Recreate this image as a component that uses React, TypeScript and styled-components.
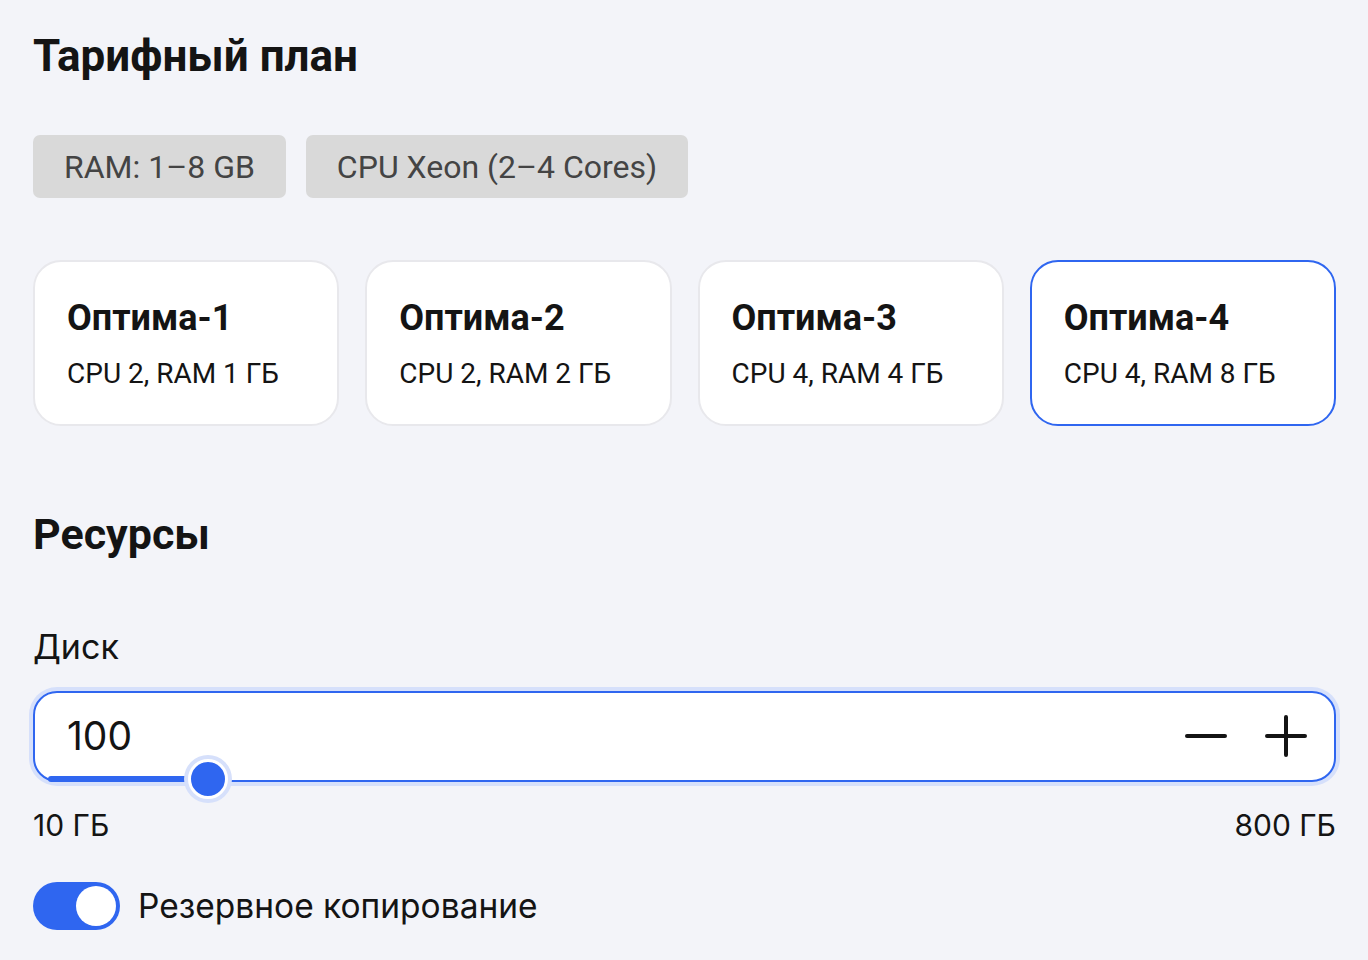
import React, { useState } from "react";
import styled, { createGlobalStyle } from "styled-components";

const GlobalStyle = createGlobalStyle`
  * { box-sizing: border-box; }
  body {
    margin: 0;
    background: #f3f4f9;
    font-family: Roboto, "Noto Sans", sans-serif;
    color: #141414;
  }
`;

interface planTypes {
  name: string;
  spec: string;
}

const plans: planTypes[] = [
  { name: "Оптима-1", spec: "CPU 2, RAM 1 ГБ" },
  { name: "Оптима-2", spec: "CPU 2, RAM 2 ГБ" },
  { name: "Оптима-3", spec: "CPU 4, RAM 4 ГБ" },
  { name: "Оптима-4", spec: "CPU 4, RAM 8 ГБ" },
];

const MIN_DISK = 10;
const MAX_DISK = 800;

const App = () => {
  const [selected, setSelected] = useState<number>(3);
  const [disk, setDisk] = useState<number>(100);
  const [backup, setBackup] = useState<boolean>(true);

  const percent = ((disk - MIN_DISK) / (MAX_DISK - MIN_DISK)) * 100;
  const thumbLeft = `calc(${percent}% + 15px)`;

  return (
    <Page>
      <GlobalStyle />
      <Title>Тарифный план</Title>
      <Chips>
        <Chip>RAM: 1–8 GB</Chip>
        <Chip>CPU Xeon (2–4 Cores)</Chip>
      </Chips>
      <Cards>
        {plans.map((plan, i) => (
          <Card key={plan.name} $active={i === selected} onClick={() => setSelected(i)}>
            <CardName>{plan.name}</CardName>
            <CardSpec>{plan.spec}</CardSpec>
          </Card>
        ))}
      </Cards>

      <SectionTitle>Ресурсы</SectionTitle>
      <FieldLabel>Диск</FieldLabel>
      <InputBox>
        <Value>{disk}</Value>
        <StepButton onClick={() => setDisk(Math.max(MIN_DISK, disk - 10))} aria-label="minus">
          <svg width="42" height="42" viewBox="0 0 42 42">
            <path d="M2 21h38" stroke="#141414" strokeWidth="4" strokeLinecap="round" />
          </svg>
        </StepButton>
        <StepButton onClick={() => setDisk(Math.min(MAX_DISK, disk + 10))} aria-label="plus">
          <svg width="42" height="42" viewBox="0 0 42 42">
            <path d="M2 21h38M21 2v38" stroke="#141414" strokeWidth="4" strokeLinecap="round" />
          </svg>
        </StepButton>
        <Track>
          <Fill style={{ width: thumbLeft }} />
          <Thumb style={{ left: thumbLeft }} />
        </Track>
      </InputBox>
      <Range>
        <span>10 ГБ</span>
        <span>800 ГБ</span>
      </Range>

      <ToggleRow onClick={() => setBackup(!backup)}>
        <Switch $on={backup}>
          <Knob />
        </Switch>
        <ToggleLabel>Резервное копирование</ToggleLabel>
      </ToggleRow>
    </Page>
  );
};

const Page = styled.div`
  padding: 28px 32px 0 33px;
  display: flex;
  flex-direction: column;
`;

const Title = styled.h1`
  margin: 0;
  font-size: 44px;
  line-height: 56px;
  font-weight: 700;
`;

const Chips = styled.div`
  display: flex;
  gap: 20px;
  margin-top: 51px;
`;

const Chip = styled.div`
  height: 63px;
  padding: 0 31px;
  display: flex;
  align-items: center;
  background: #d9d9d9;
  border-radius: 7px;
  color: #444;
  font-size: 32px;
`;

const Cards = styled.div`
  display: grid;
  grid-template-columns: repeat(4, 1fr);
  gap: 26px;
  margin-top: 62px;
`;

const Card = styled.div<{ $active: boolean }>`
  height: 166px;
  padding: 34px 32px 0;
  background: #fff;
  border: 2px solid ${(p) => (p.$active ? "#2f66f0" : "#e8e8ec")};
  border-radius: 28px;
  cursor: pointer;
`;

const CardName = styled.div`
  font-size: 36px;
  line-height: 44px;
  font-weight: 700;
`;

const CardSpec = styled.div`
  margin-top: 18px;
  font-size: 28px;
  line-height: 32px;
`;

const SectionTitle = styled.h2`
  margin: 80px 0 0;
  font-size: 43px;
  line-height: 56px;
  font-weight: 700;
`;

const FieldLabel = styled.div`
  margin-top: 64px;
  font-family: Inter, Roboto, sans-serif;
  font-size: 34px;
  line-height: 42px;
`;

const InputBox = styled.div`
  position: relative;
  margin-top: 23px;
  height: 91px;
  display: flex;
  align-items: center;
  gap: 38px;
  padding: 0 27px 2px 32px;
  background: #fff;
  border: 2px solid #2f66f0;
  border-radius: 24px;
  box-shadow: 0 0 0 4px #d6e0fb;
`;

const Value = styled.div`
  flex: 1;
  font-family: Inter, Roboto, sans-serif;
  font-size: 39px;
  color: #141414;
`;

const StepButton = styled.button`
  border: 0;
  background: none;
  padding: 0;
  display: flex;
  cursor: pointer;
`;

const Track = styled.div`
  position: absolute;
  left: 13px;
  right: 13px;
  bottom: -2px;
  height: 6px;
`;

const Fill = styled.div`
  height: 6px;
  background: #2f66f0;
  border-radius: 3px;
`;

const Thumb = styled.div`
  position: absolute;
  top: 3px;
  width: 40px;
  height: 40px;
  margin: -20px 0 0 -20px;
  border-radius: 50%;
  background: #2f66f0;
  border: 3px solid #fff;
  box-shadow: 0 0 0 4px #d6e0fb;
`;

const Range = styled.div`
  display: flex;
  justify-content: space-between;
  margin-top: 23px;
  font-family: Inter, Roboto, sans-serif;
  font-size: 30px;
  line-height: 40px;
`;

const ToggleRow = styled.div`
  display: flex;
  align-items: center;
  gap: 18px;
  margin-top: 37px;
  cursor: pointer;
`;

const Switch = styled.div<{ $on: boolean }>`
  width: 87px;
  height: 48px;
  border-radius: 24px;
  padding: 4px;
  background: ${(p) => (p.$on ? "#2f66f0" : "#c9ccd6")};
  display: flex;
  justify-content: ${(p) => (p.$on ? "flex-end" : "flex-start")};
`;

const Knob = styled.div`
  width: 40px;
  height: 40px;
  border-radius: 50%;
  background: #fff;
`;

const ToggleLabel = styled.span`
  font-family: Inter, Roboto, sans-serif;
  font-size: 33.5px;
`;

export default App;
